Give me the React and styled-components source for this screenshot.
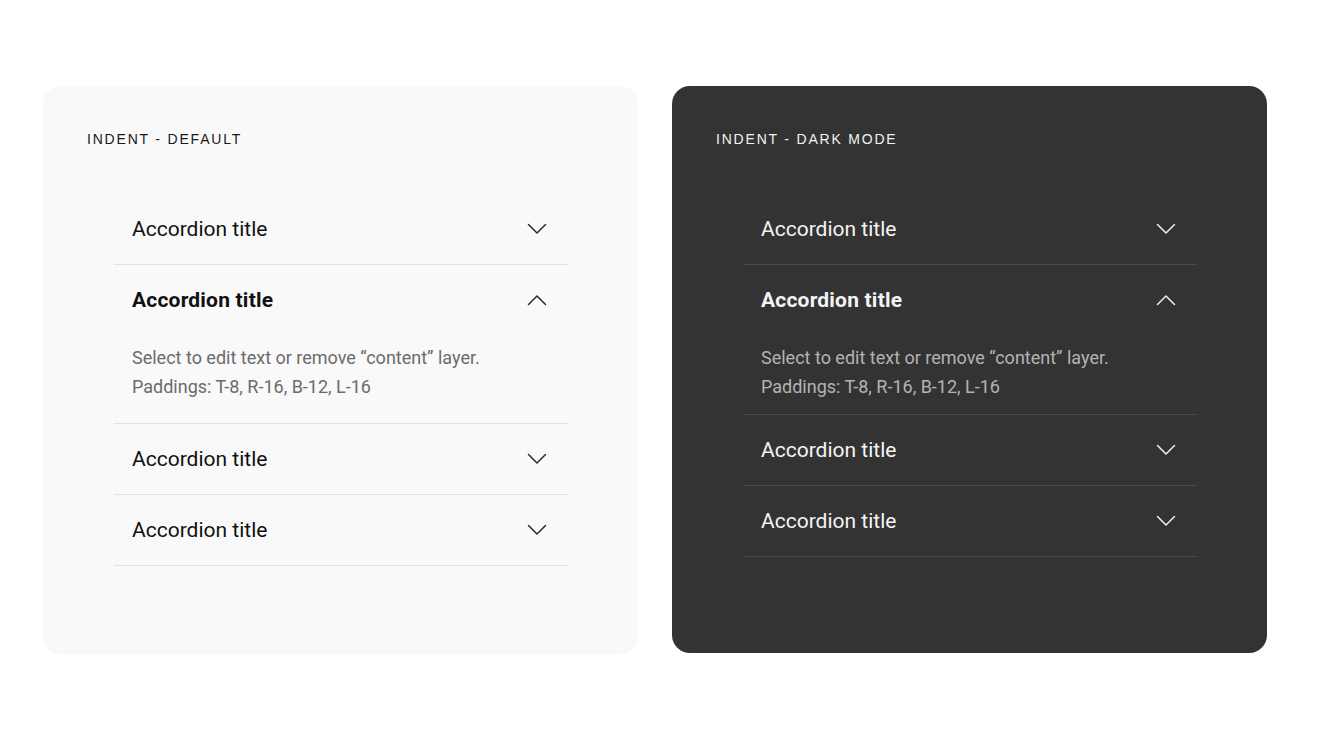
import React from 'react';
import styled, { createGlobalStyle } from 'styled-components';

const GlobalStyle = createGlobalStyle`
    html, body {
        margin: 0;
        padding: 0;
        background: #ffffff;
    }
    body {
        font-family: Roboto, "Noto Sans", sans-serif;
    }
`;

const Page = styled.div`
    display: flex;
    gap: 34px;
    padding: 86px 0 0 43px;
    width: 1320px;
    height: 743px;
    box-sizing: border-box;
`;

const Card = styled.div`
    width: 595px;
    height: 567px;
    box-sizing: border-box;
    padding: 45px 44px 0;
    border-radius: 18px;
    background: ${(props) => (props.dark ? '#333333' : '#f9f9f9')};
    box-shadow: ${(props) => (props.dark ? 'none' : '0 1px 2px rgba(0, 0, 0, 0.04)')};
`;

const Label = styled.div`
    font-family: "Liberation Sans", Arial, sans-serif;
    font-size: 14px;
    line-height: 16px;
    letter-spacing: 1.8px;
    color: ${(props) => (props.dark ? '#f2f2f2' : '#1a1a1a')};
`;

const List = styled.div`
    margin: 47px 26px 0 27px;
`;

const Item = styled.div`
    border-bottom: 1px solid ${(props) => (props.dark ? '#4a4a4a' : '#e2e2e2')};
`;

const Header = styled.div`
    height: 70px;
    display: flex;
    align-items: center;
    justify-content: space-between;
    padding: 0 21px 0 18px;
    box-sizing: border-box;
`;

const Title = styled.span`
    font-size: 21px;
    font-weight: ${(props) => (props.open ? 700 : 400)};
    letter-spacing: ${(props) => (props.open ? '0.2px' : '0')};
    color: ${(props) => (props.dark ? '#f4f4f4' : '#111111')};
`;

const Content = styled.div`
    padding: 8px 18px ${(props) => (props.dark ? '13px' : '22px')};
    font-size: 18px;
    line-height: 29px;
    color: ${(props) => (props.dark ? '#b3b3b3' : '#6b6b6b')};
`;

const Chevron = ({ open, dark }) => (
    <svg width="20" height="12" viewBox="0 0 20 12" fill="none">
        <polyline
            points={open ? '1.5,10.5 10,2 18.5,10.5' : '1.5,1.5 10,10 18.5,1.5'}
            stroke={dark ? '#f0f0f0' : '#2b2b2b'}
            strokeWidth="1.5"
            strokeLinecap="round"
            strokeLinejoin="round"
        />
    </svg>
);

const AccordionItem = ({ open, dark }) => (
    <Item dark={dark}>
        <Header>
            <Title open={open} dark={dark}>Accordion title</Title>
            <Chevron open={open} dark={dark} />
        </Header>
        {open && (
            <Content dark={dark}>
                Select to edit text or remove “content” layer.
                <br />
                Paddings: T-8, R-16, B-12, L-16
            </Content>
        )}
    </Item>
);

const Panel = ({ label, dark }) => (
    <Card dark={dark}>
        <Label dark={dark}>{label}</Label>
        <List>
            <AccordionItem dark={dark} />
            <AccordionItem dark={dark} open />
            <AccordionItem dark={dark} />
            <AccordionItem dark={dark} />
        </List>
    </Card>
);

export default function App() {
    return (
        <>
            <GlobalStyle />
            <Page>
                <Panel label="INDENT - DEFAULT" />
                <Panel label="INDENT - DARK MODE" dark />
            </Page>
        </>
    );
}
